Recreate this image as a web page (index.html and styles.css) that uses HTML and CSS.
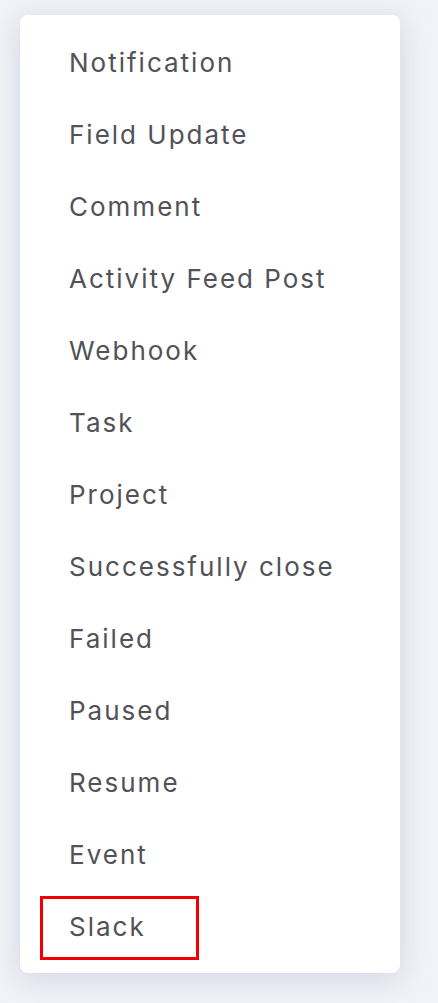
FILE: index.html
```html
<!DOCTYPE html>
<html>
<head>
<meta charset="utf-8">
<link rel="stylesheet" href="styles.css">
</head>
<body>
<div class="menu">
  <div class="item">Notification</div>
  <div class="item">Field Update</div>
  <div class="item">Comment</div>
  <div class="item">Activity Feed Post</div>
  <div class="item">Webhook</div>
  <div class="item">Task</div>
  <div class="item">Project</div>
  <div class="item">Successfully close</div>
  <div class="item">Failed</div>
  <div class="item">Paused</div>
  <div class="item">Resume</div>
  <div class="item">Event</div>
  <div class="item item-marked">Slack<span class="mark"></span></div>
</div>
</body>
</html>
```
FILE: styles.css
```css
html, body {
  margin: 0;
  padding: 0;
}
body {
  background: #f2f3f8;
  width: 438px;
  height: 1003px;
  overflow: hidden;
  font-family: Inter, "Noto Sans", sans-serif;
}
.menu {
  margin: 15px 0 0 20px;
  width: 380px;
  box-sizing: border-box;
  padding: 11px 0;
  background: #ffffff;
  border-radius: 8px;
  box-shadow: 0 6px 30px rgba(150, 155, 185, 0.35);
  display: flex;
  flex-direction: column;
}
.item {
  position: relative;
  height: 72px;
  display: flex;
  align-items: center;
  padding-left: 49px;
  font-size: 26px;
  letter-spacing: 2px;
  color: #515257;
}
.mark {
  position: absolute;
  left: 20px;
  top: 6px;
  width: 159px;
  height: 64px;
  box-sizing: border-box;
  border: 3px solid #f00000;
}
```
